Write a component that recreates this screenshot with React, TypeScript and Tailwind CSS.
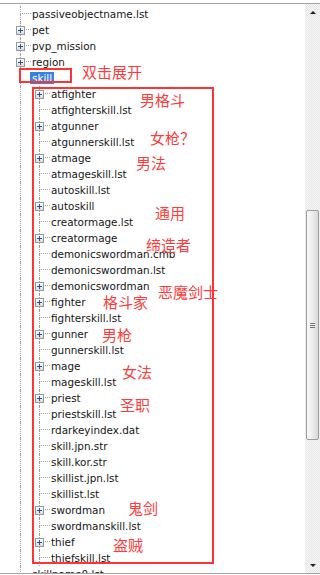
import React from 'react'

type Kind = 'leaf' | 'plus' | 'open'

interface Node {
  label: string
  level: 0 | 1
  kind: Kind
}

const rows: Node[] = [
  { label: 'passiveobjectname.lst', level: 0, kind: 'leaf' },
  { label: 'pet', level: 0, kind: 'plus' },
  { label: 'pvp_mission', level: 0, kind: 'plus' },
  { label: 'region', level: 0, kind: 'plus' },
  { label: 'skill', level: 0, kind: 'open' },
  { label: 'atfighter', level: 1, kind: 'plus' },
  { label: 'atfighterskill.lst', level: 1, kind: 'leaf' },
  { label: 'atgunner', level: 1, kind: 'plus' },
  { label: 'atgunnerskill.lst', level: 1, kind: 'leaf' },
  { label: 'atmage', level: 1, kind: 'plus' },
  { label: 'atmageskill.lst', level: 1, kind: 'leaf' },
  { label: 'autoskill.lst', level: 1, kind: 'leaf' },
  { label: 'autoskill', level: 1, kind: 'plus' },
  { label: 'creatormage.lst', level: 1, kind: 'leaf' },
  { label: 'creatormage', level: 1, kind: 'plus' },
  { label: 'demonicswordman.cmb', level: 1, kind: 'leaf' },
  { label: 'demonicswordman.lst', level: 1, kind: 'leaf' },
  { label: 'demonicswordman', level: 1, kind: 'plus' },
  { label: 'fighter', level: 1, kind: 'plus' },
  { label: 'fighterskill.lst', level: 1, kind: 'leaf' },
  { label: 'gunner', level: 1, kind: 'plus' },
  { label: 'gunnerskill.lst', level: 1, kind: 'leaf' },
  { label: 'mage', level: 1, kind: 'plus' },
  { label: 'mageskill.lst', level: 1, kind: 'leaf' },
  { label: 'priest', level: 1, kind: 'plus' },
  { label: 'priestskill.lst', level: 1, kind: 'leaf' },
  { label: 'rdarkeyindex.dat', level: 1, kind: 'leaf' },
  { label: 'skill.jpn.str', level: 1, kind: 'leaf' },
  { label: 'skill.kor.str', level: 1, kind: 'leaf' },
  { label: 'skillist.jpn.lst', level: 1, kind: 'leaf' },
  { label: 'skillist.lst', level: 1, kind: 'leaf' },
  { label: 'swordman', level: 1, kind: 'plus' },
  { label: 'swordmanskill.lst', level: 1, kind: 'leaf' },
  { label: 'thief', level: 1, kind: 'plus' },
  { label: 'thiefskill.lst', level: 1, kind: 'leaf' },
  { label: 'skillname0.lst', level: 0, kind: 'leaf' },
]

// red hand-written notes laid over the screenshot
const notes = [
  { text: '双击展开', className: 'left-[82px] top-[63px]' },
  { text: '男格斗', className: 'left-[140px] top-[91px]' },
  { text: '女枪？', className: 'left-[150px] top-[129px]' },
  { text: '男法', className: 'left-[136px] top-[154px]' },
  { text: '通用', className: 'left-[155px] top-[204px]' },
  { text: '缔造者', className: 'left-[146px] top-[236px]' },
  { text: '恶魔剑士', className: 'left-[158px] top-[283px]' },
  { text: '格斗家', className: 'left-[103px] top-[293px]' },
  { text: '男枪', className: 'left-[102px] top-[326px]' },
  { text: '女法', className: 'left-[122px] top-[363px]' },
  { text: '圣职', className: 'left-[120px] top-[396px]' },
  { text: '鬼剑', className: 'left-[128px] top-[499px]' },
  { text: '盗贼', className: 'left-[113px] top-[536px]' },
]

function PlusBox() {
  return (
    <span className="absolute left-[3px] top-[4px] flex h-[9px] w-[9px] items-center justify-center border border-[#9a9a9a] bg-gradient-to-b from-white to-[#dcdcdc]">
      <span className="absolute h-[1px] w-[5px] bg-[#2b4f9e]" />
      <span className="absolute h-[5px] w-[1px] bg-[#2b4f9e]" />
    </span>
  )
}

function Guide() {
  return (
    <div className="w-[19px] self-stretch">
      <div className="ml-[7px] h-full border-l border-dotted border-[#a0a0a0]" />
    </div>
  )
}

function Branch({ box, open }: { box: boolean; open: boolean }) {
  return (
    <div className="relative flex w-[19px] flex-col self-stretch">
      {open ? (
        <div className="h-1/2" />
      ) : (
        <div className="ml-[7px] h-1/2 w-[11px] border-b border-l border-dotted border-[#a0a0a0]" />
      )}
      <div className="ml-[7px] h-1/2 border-l border-dotted border-[#a0a0a0]" />
      {box && <PlusBox />}
    </div>
  )
}

function Row({ node }: { node: Node }) {
  return (
    <div className="flex h-[16px] items-center">
      <div className="w-[13px]" />
      {node.level === 1 && <Guide />}
      <Branch box={node.kind === 'plus'} open={node.kind === 'open'} />
      {node.kind === 'open' ? (
        <span className="ml-[-2px] bg-[#3b7fe0] px-[2px] leading-[12px] text-white">{node.label}</span>
      ) : (
        <span className="leading-[16px]">{node.label}</span>
      )}
    </div>
  )
}

function ScrollBar() {
  return (
    <div className="flex w-[15px] flex-col items-center bg-[#f1f1f1] bg-[repeating-conic-gradient(#e6e6e6_0_25%,#f7f7f7_0_50%)] bg-[length:2px_2px]">
      <div className="mt-[7px] h-0 w-0 border-x-[3px] border-b-[3px] border-x-transparent border-b-[#222]" />
      <div className="mt-[196px] flex h-[230px] w-[13px] items-center justify-center rounded-[2px] border border-[#9c9c9c] bg-gradient-to-r from-[#fafafa] via-[#ececec] to-[#d9d9d9]">
        <div className="flex flex-col gap-[1px]">
          <div className="h-[1px] w-[5px] bg-[#777]" />
          <div className="h-[1px] w-[5px] bg-[#777]" />
          <div className="h-[1px] w-[5px] bg-[#777]" />
        </div>
      </div>
      <div className="mt-auto mb-[6px] h-0 w-0 border-x-[3px] border-t-[3px] border-x-transparent border-t-[#222]" />
    </div>
  )
}

export default function App() {
  return (
    <div className="relative h-[575px] w-[320px] overflow-hidden bg-white font-['DejaVu_Sans',sans-serif] text-[10.4px] text-[#161616]">
      <div className="h-[3px]" />
      <div className="flex h-[571px] border-y border-[#a3a3a3]">
        <div className="flex-1 overflow-hidden pt-[2px]">
          {rows.map((node) => (
            <Row key={node.label} node={node} />
          ))}
        </div>
        <ScrollBar />
      </div>

      <div className="absolute left-[19px] top-[68px] h-[15px] w-[53px] border-2 border-[#ff3333]" />
      <div className="absolute left-[32px] top-[87px] h-[477px] w-[182px] border-2 border-[#ff3333]" />
      {notes.map((n) => (
        <span
          key={n.text}
          className={`absolute whitespace-nowrap font-['Noto_Sans_CJK_SC',sans-serif] text-[15px] leading-[18px] text-[#ff3b3b] ${n.className}`}
        >
          {n.text}
        </span>
      ))}
    </div>
  )
}
